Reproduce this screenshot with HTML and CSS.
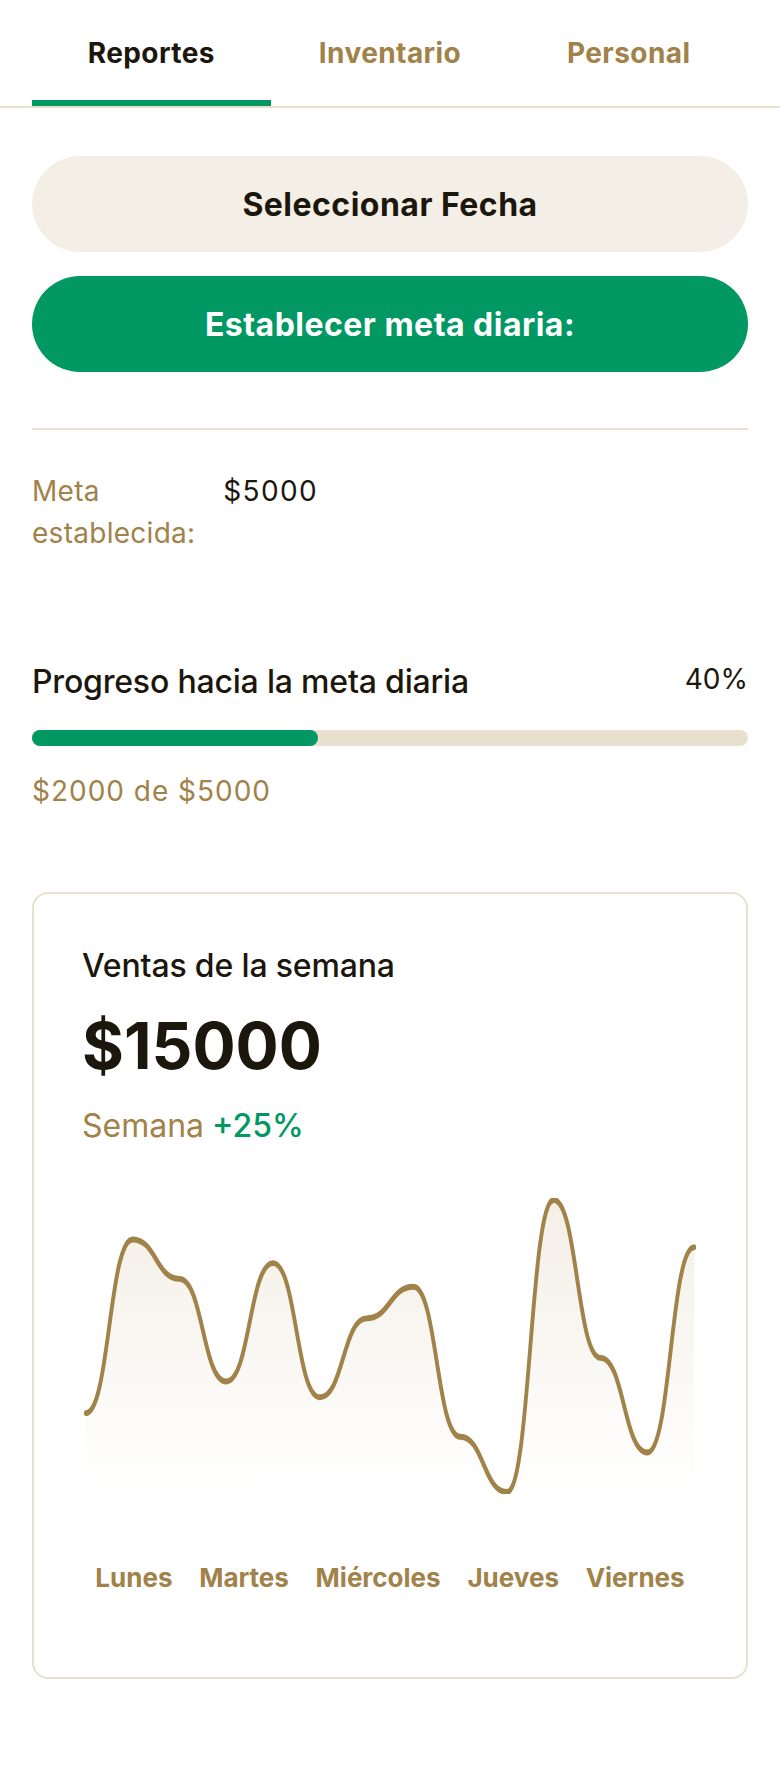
FILE: index.html
```html
<!DOCTYPE html>
<html lang="es">
<head>
<meta charset="utf-8">
<title>Reportes</title>
<link rel="stylesheet" href="styles.css">
</head>
<body>
<div class="page">
  <nav class="tabs">
    <a class="tab active">Reportes</a>
    <a class="tab">Inventario</a>
    <a class="tab">Personal</a>
  </nav>

  <div class="actions">
    <button class="btn btn-light">Seleccionar Fecha</button>
    <button class="btn btn-green">Establecer meta diaria:</button>
  </div>

  <div class="details">
    <div class="detail-row">
      <p class="detail-label">Meta establecida:</p>
      <p class="detail-value num">$5000</p>
    </div>
  </div>

  <div class="progress">
    <div class="progress-head">
      <p class="progress-title">Progreso hacia la meta diaria</p>
      <p class="progress-pct">40%</p>
    </div>
    <div class="bar"><div class="bar-fill" style="width: 40%;"></div></div>
    <p class="progress-sub num-sm">$2000 de $5000</p>
  </div>

  <div class="cards">
    <div class="card">
      <p class="card-title">Ventas de la semana</p>
      <p class="card-amount">$15000</p>
      <div class="card-delta">
        <span class="delta-label">Semana</span>
        <span class="delta-value">+25%</span>
      </div>
      <div class="chart">
        <svg class="chart-svg" width="100%" height="296" viewBox="-3 0 478 150" fill="none" preserveAspectRatio="none" xmlns="http://www.w3.org/2000/svg">
          <path d="M0 109C18.1538 109 18.1538 21 36.3077 21C54.4615 21 54.4615 41 72.6154 41C90.7692 41 90.7692 93 108.923 93C127.077 93 127.077 33 145.231 33C163.385 33 163.385 101 181.538 101C199.692 101 199.692 61 217.846 61C236 61 236 45 254.154 45C272.308 45 272.308 121 290.462 121C308.615 121 308.615 149 326.769 149C344.923 149 344.923 1 363.077 1C381.231 1 381.231 81 399.385 81C417.538 81 417.538 129 435.692 129C453.846 129 453.846 25 472 25V149H326.769H0V109Z" fill="url(#paint0_linear)"/>
          <path d="M0 109C18.1538 109 18.1538 21 36.3077 21C54.4615 21 54.4615 41 72.6154 41C90.7692 41 90.7692 93 108.923 93C127.077 93 127.077 33 145.231 33C163.385 33 163.385 101 181.538 101C199.692 101 199.692 61 217.846 61C236 61 236 45 254.154 45C272.308 45 272.308 121 290.462 121C308.615 121 308.615 149 326.769 149C344.923 149 344.923 1 363.077 1C381.231 1 381.231 81 399.385 81C417.538 81 417.538 129 435.692 129C453.846 129 453.846 25 472 25" stroke="#A18249" stroke-width="3" stroke-linecap="round"/>
          <defs>
            <linearGradient id="paint0_linear" x1="236" y1="1" x2="236" y2="149" gradientUnits="userSpaceOnUse">
              <stop stop-color="#f4efe6"/>
              <stop offset="1" stop-color="#f4efe6" stop-opacity="0"/>
            </linearGradient>
          </defs>
        </svg>
        <div class="days">
          <p class="day">Lunes</p>
          <p class="day">Martes</p>
          <p class="day">Miércoles</p>
          <p class="day">Jueves</p>
          <p class="day">Viernes</p>
        </div>
      </div>
    </div>
  </div>
</div>
</body>
</html>
```

FILE: styles.css
```css
* { box-sizing: border-box; }
html, body { margin: 0; padding: 0; background: #ffffff; }
body {
  font-family: "Inter", "Noto Sans", "Liberation Sans", sans-serif;
  color: #1c170d;
}
p { margin: 0; }

.page { width: 780px; }

.tabs {
  display: flex;
  padding: 0 32px;
  border-bottom: 2px solid #e9dfce;
}
.tab {
  flex: 1;
  display: flex;
  justify-content: center;
  padding: 32px 0 26px;
  border-bottom: 6px solid transparent;
  font-size: 28px;
  font-weight: 700;
  line-height: 42px;
  letter-spacing: 0.015em;
  color: #a18249;
}
.tab.active {
  color: #1c170d;
  border-bottom-color: #019863;
}

.actions {
  display: flex;
  flex-direction: column;
  gap: 24px;
  padding: 48px 32px 24px;
}
.btn {
  height: 96px;
  border: none;
  border-radius: 9999px;
  padding: 0 40px;
  font-family: inherit;
  font-size: 32px;
  font-weight: 700;
  letter-spacing: 0.015em;
  cursor: pointer;
}
.btn-light { background: #f4efe6; color: #1c170d; }
.btn-green { background: #019863; color: #ffffff; }

.details { padding: 32px; }
.detail-row {
  display: grid;
  grid-template-columns: 20% 1fr;
  column-gap: 48px;
  border-top: 2px solid #e9dfce;
  padding: 40px 0;
}
.detail-label, .detail-value {
  font-size: 28px;
  line-height: 42px;
}
.detail-label { color: #a18249; letter-spacing: 0.01em; }
.detail-value { color: #1c170d; }
.num { letter-spacing: 0.05em; }
.num-sm { letter-spacing: 0.035em; }

.progress {
  display: flex;
  flex-direction: column;
  gap: 24px;
  padding: 32px;
}
.progress-head {
  display: flex;
  justify-content: space-between;
  gap: 48px;
}
.progress-title {
  font-size: 32px;
  font-weight: 500;
  line-height: 48px;
  letter-spacing: -0.006em;
}
.progress-pct {
  font-size: 28px;
  line-height: 42px;
}
.bar {
  background: #e9dfce;
  border-radius: 8px;
}
.bar-fill {
  height: 16px;
  border-radius: 8px;
  background: #019863;
}
.progress-sub {
  color: #a18249;
  font-size: 28px;
  line-height: 42px;
}

.cards { padding: 48px 32px; }
.card {
  display: flex;
  flex-direction: column;
  gap: 16px;
  border: 2px solid #e9dfce;
  border-radius: 16px;
  padding: 48px;
}
.card-title {
  font-size: 32px;
  font-weight: 500;
  line-height: 48px;
  letter-spacing: -0.005em;
}
.card-amount {
  font-size: 64px;
  font-weight: 700;
  line-height: 80px;
  letter-spacing: 0;
}
.card-delta {
  display: flex;
  gap: 8px;
  font-size: 32px;
  line-height: 48px;
}
.delta-label { color: #a18249; }
.delta-value { color: #019863; font-weight: 500; }

.chart {
  display: flex;
  flex-direction: column;
  gap: 64px;
  padding: 32px 0;
  min-height: 360px;
}
.chart-svg { display: block; }
.days {
  display: flex;
  justify-content: space-around;
}
.day {
  color: #a18249;
  font-size: 26px;
  font-weight: 700;
  line-height: 39px;
  letter-spacing: 0;
}
```
